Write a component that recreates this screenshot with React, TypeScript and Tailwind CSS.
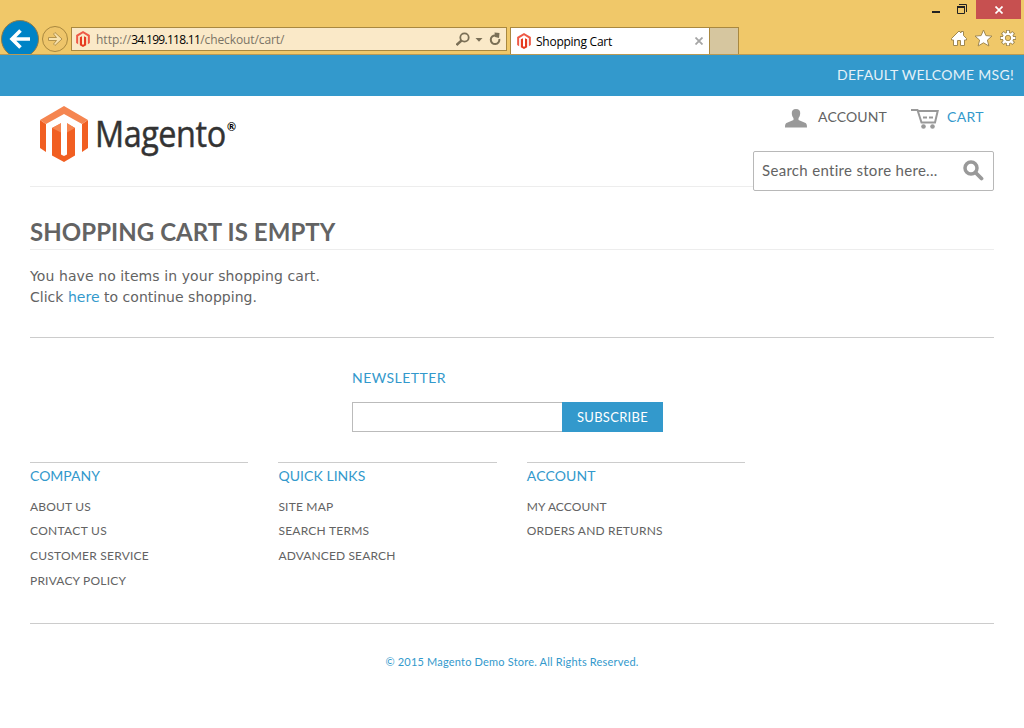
import React from "react";

const MiniLogo = () => (
  <svg viewBox="0 0 48 56" className="h-[16px] w-[14px] shrink-0">
    <path fill="#ee5a47" d="M24 0 0 14v28l7 4V18l17-10 17 10v28l7-4V14z" />
    <path fill="#e63a20" d="M27.500 46 24 48l-3.500-2V18L13 22v28l11 6 11-6V22l-7.500-4z" />
  </svg>
);

const columns = [
  {
    title: "COMPANY",
    tracking: "",
    links: [
      { label: "ABOUT US", tracking: "tracking-[0.19px]" },
      { label: "CONTACT US", tracking: "tracking-[0.31px]" },
      { label: "CUSTOMER SERVICE", tracking: "tracking-[0.22px]" },
      { label: "PRIVACY POLICY", tracking: "tracking-[0.19px]" },
    ],
  },
  {
    title: "QUICK LINKS",
    tracking: "tracking-[0.06px]",
    links: [
      { label: "SITE MAP", tracking: "tracking-[0.19px]" },
      { label: "SEARCH TERMS", tracking: "tracking-[0.24px]" },
      { label: "ADVANCED SEARCH", tracking: "tracking-[0.13px]" },
    ],
  },
  {
    title: "ACCOUNT",
    tracking: "tracking-[0.14px]",
    links: [
      { label: "MY ACCOUNT", tracking: "tracking-[0.09px]" },
      { label: "ORDERS AND RETURNS", tracking: "tracking-[0.17px]" },
    ],
  },
];

function BrowserChrome() {
  return (
    <div className="flex h-[55px] flex-col border-b border-[#b99a55] bg-[#f0c869]">
      <div className="flex h-[19px] justify-end pr-[3px]">
        <svg viewBox="0 0 52 19" className="h-[19px] w-[52px]">
          <path fill="#222" d="M8 11h8v2H8z" />
          <path fill="none" stroke="#222" d="M35 4.500h7.500V12" />
          <path fill="none" stroke="#222" d="M33.500 6.500h7v7h-7z" />
          <path fill="#222" d="M33 6h8v2h-8z" />
        </svg>
        <div className="flex w-[45px] items-center justify-center bg-[#c75050]">
          <svg viewBox="0 0 8 8" className="h-[8px] w-[8px]">
            <path stroke="#fff" strokeWidth="1.700" d="M.5.5l7 7M7.500.5l-7 7" />
          </svg>
        </div>
      </div>
      <div className="flex h-[35px] items-end">
        <svg viewBox="0 19 41 35" className="h-[35px] w-[41px]">
          <circle cx="20" cy="39" r="18.500" fill="#0083c6" stroke="#8d7b4a" />
          <path fill="none" stroke="#fff" strokeWidth="3.600" d="M30 39H12M20.500 30.500 12 39l8.500 8.500" />
        </svg>
        <svg viewBox="41 19 30 35" className="h-[35px] w-[30px]">
          <circle cx="55" cy="39" r="12.500" fill="#eec56a" stroke="#a9883f" />
          <path fill="#f8e2ae" stroke="#b3934c" d="M48.500 37.500h8l-3-3.500 1.500-1.500 7 6.500-7 6.500-1.500-1.500 3-3.500h-8z" />
        </svg>
        <div className="mb-[3px] flex h-[24px] w-[436px] items-center border border-[#a9883f] bg-[#fae9c8] pl-[4px]">
          <MiniLogo />
          <span className="ml-[6px] flex pt-[2px] font-['Open_Sans',sans-serif] text-[12px] text-[#7b7466]">
            <span>http://</span>
            <span className="tracking-[-0.7px] text-black">34.199.118.11</span>
            <span className="tracking-[-0.1px]">/checkout/cart/</span>
          </span>
          <svg viewBox="455 28 50 22" className="ml-auto h-[22px] w-[50px]">
            <circle cx="463.500" cy="37.500" r="4.200" fill="none" stroke="#7a6f56" strokeWidth="1.800" />
            <path stroke="#7a6f56" strokeWidth="2.400" d="M460.500 40.500l-5 4.500" />
            <path fill="#7a6f56" d="M474.500 38h7l-3.500 3.800z" />
            <path fill="none" stroke="#7a6f56" strokeWidth="2" d="M494.500 35.500a4.300 4.300 0 1 0 3.800 3.500" />
            <path fill="#7a6f56" d="M493.500 32.500l5 .5-.5 5-4-1z" />
          </svg>
        </div>
        <div className="ml-[3px] flex h-[27px] w-[200px] items-center border border-b-0 border-[#a9883f] bg-white pl-[6px]">
          <MiniLogo />
          <span className="ml-[5px] whitespace-nowrap pt-[2px] font-['Open_Sans',sans-serif] text-[12px] tracking-[-0.25px] text-black">
            Shopping Cart
          </span>
          <svg viewBox="0 0 8 8" className="ml-auto mr-[6px] h-[8px] w-[8px]">
            <path stroke="#a5a5a5" strokeWidth="1.800" d="M.5.5l7 7M7.500.5l-7 7" />
          </svg>
        </div>
        <div className="h-[27px] w-[29px] border border-b-0 border-l-0 border-[#a9883f] bg-[#d6c69f]" />
        <svg viewBox="950 19 68 35" className="ml-auto mr-[6px] h-[35px] w-[68px]">
          <path
            fill="#fff"
            stroke="#a08850"
            d="M951.500 38.500l7.500-7.500 2 2v-1.500h2.500v4l3 3v1.500h-2V45.500h-4v-5h-3v5h-4V40h-2z"
          />
          <path
            fill="#fff"
            stroke="#a08850"
            d="M983.500 30l2.400 5.600 6.100.5-4.600 4 1.500 5.900-5.400-3.200-5.400 3.200 1.500-5.900-4.600-4 6.100-.5z"
          />
          <path
            stroke="#a08850"
            strokeWidth="4"
            d="M1008 30v16M1000 38h16M1002.300 32.300l11.400 11.400M1013.700 32.300l-11.400 11.400"
          />
          <circle cx="1008" cy="38" r="6" fill="#a08850" />
          <path
            stroke="#fff"
            strokeWidth="2.200"
            d="M1008 30.700v14.600M1000.700 38h14.600M1002.900 32.900l10.200 10.200M1013.100 32.900l-10.200 10.200"
          />
          <circle cx="1008" cy="38" r="4" fill="#f0c869" stroke="#fff" strokeWidth="2.400" />
          <circle cx="1008" cy="38" r="2.700" fill="#f0c869" stroke="#a08850" strokeWidth="0.900" />
        </svg>
      </div>
    </div>
  );
}

function Header() {
  return (
    <header className="mx-[30px] flex h-[91px] items-start justify-between border-b border-[#ededed]">
      <div className="ml-[10px] mt-[10px] flex">
        <svg viewBox="0 0 48 56" className="h-[56px] w-[48px]">
          <path fill="#f15f22" d="M0 14v28l6 4V18zM48 14v28l-6 4V18z" />
          <path fill="#f58550" d="M24 0 0 14l6 4L24 8l18 10 6-4z" />
          <path fill="#f15f22" d="M27 48.500 24 50l-3-1.500V17.500L12 22v27.500L24 56l11-6.500V22l-8-4.500z" />
          <path fill="#f58550" d="M21 17v9.500L12 22zM27 17v9.500l8-4.500z" />
        </svg>
        <div className="ml-[7px] flex items-start text-[#333]">
          <span className="mt-[3px] w-[132px] origin-left scale-x-[0.875] whitespace-nowrap font-['Open_Sans',sans-serif] text-[37px] font-medium leading-[48px] tracking-[-0.5px] [-webkit-text-stroke:0.5px_#333]">
            Magento
          </span>
          <span className="mt-[15px] text-[11px] font-bold leading-[12px] text-black">®</span>
        </div>
      </div>
      <div className="flex flex-col items-end">
        <div className="mr-[10px] flex h-[55px] items-start text-[14px]">
          <svg viewBox="785 108 22 20" className="mt-[12px] h-[20px] w-[22px]">
            <path
              fill="#999"
              d="M796 109c-3 0-4.500 2-4.200 4.700.2 2.300 1 3.300 1.700 4.500v1.800l-6.500 2.800c-1.500.7-2 1.500-2 4.700h22c0-3.200-.5-4-2-4.700l-6.500-2.800v-1.800c.7-1.200 1.500-2.200 1.700-4.500.3-2.700-1.200-4.700-4.200-4.700z"
            />
          </svg>
          <span className="ml-[11px] mt-[11px] leading-[20px] tracking-[0.14px]">ACCOUNT</span>
          <svg viewBox="911 108 28 21" className="ml-[24px] mt-[12px] h-[21px] w-[28px]">
            <path fill="none" stroke="#999" strokeWidth="2" d="M911 110h6.500l4 12.500h13.500l2.700-11.500H918" />
            <path stroke="#999" strokeWidth="2" d="M923 117.500h4M929 117.500h4" />
            <circle cx="923.500" cy="126.500" r="2.300" fill="#999" />
            <circle cx="932.500" cy="126.500" r="2.300" fill="#999" />
          </svg>
          <span className="ml-[8px] mt-[11px] leading-[20px] tracking-[0.36px] text-[#3399cc]">CART</span>
        </div>
        <div className="z-10 flex h-[40px] w-[241px] shrink-0 items-center justify-between rounded-[2px] border border-[#b8b8b8] bg-white pl-[8px] pr-[9px] text-[15px]">
          <span className="mb-[2px] tracking-[0.31px]">Search entire store here...</span>
          <svg viewBox="0 0 21 21" className="mb-[2px] h-[21px] w-[21px]">
            <circle cx="8" cy="8" r="6" fill="none" stroke="#999" strokeWidth="3.500" />
            <path stroke="#999" strokeWidth="3.800" strokeLinecap="round" d="M13 13l5.500 5.500" />
          </svg>
        </div>
      </div>
    </header>
  );
}

export default function App() {
  return (
    <div className="h-[728px] w-[1024px] overflow-hidden bg-white font-['Lato',sans-serif] text-[#636363]">
      <BrowserChrome />

      <div className="flex h-[41px] items-center justify-end bg-[#3399cc] pb-[2px] pr-[10px] text-[14px] tracking-[0.28px] text-[#e4f1f8]">
        DEFAULT WELCOME MSG!
      </div>

      <Header />

      <main className="mx-[30px]">
        <h1 className="flex h-[63px] items-end border-b border-[#ededed] pb-[1px] text-[24px] font-bold leading-[32px] tracking-[0.06px]">
          SHOPPING CART IS EMPTY
        </h1>
        <div className="h-[88px] border-b border-[#ccc] pt-[16px] font-['DejaVu_Sans',sans-serif] text-[14px] leading-[21px]">
          <p className="tracking-[0.09px]">You have no items in your shopping cart.</p>
          <p className="tracking-[0.02px]">
            Click <a className="text-[#3399cc]">here</a> to continue shopping.
          </p>
        </div>
      </main>

      <footer className="mx-[30px]">
        <div className="ml-[322px] flex h-[124px] flex-col pt-[30px]">
          <h2 className="text-[14px] leading-[20px] tracking-[0.45px] text-[#3399cc]">NEWSLETTER</h2>
          <div className="mt-[14px] flex h-[30px]">
            <input aria-label="Newsletter" className="w-[210px] border border-r-0 border-[#bbb]" />
            <button className="w-[101px] bg-[#3399cc] pt-[2px] text-[13px] tracking-[0.28px] text-white">
              SUBSCRIBE
            </button>
          </div>
        </div>
        <div className="flex h-[161px] gap-[30px]">
          {columns.map((column) => (
            <div key={column.title} className="w-[218.400px]">
              <h2 className={`border-t border-[#ccc] pt-[3px] text-[14px] leading-[20px] text-[#3399cc] ${column.tracking}`}>
                {column.title}
              </h2>
              <ul className="mt-[8.500px] text-[12px] leading-[24.700px]">
                {column.links.map((link) => (
                  <li key={link.label} className={link.tracking}>
                    {link.label}
                  </li>
                ))}
              </ul>
            </div>
          ))}
        </div>
        <div className="border-t border-[#ccc] pt-[30px] text-center text-[11px] leading-[16px] tracking-[0.19px] text-[#3399cc]">
          © 2015 Magento Demo Store. All Rights Reserved.
        </div>
      </footer>
    </div>
  );
}
